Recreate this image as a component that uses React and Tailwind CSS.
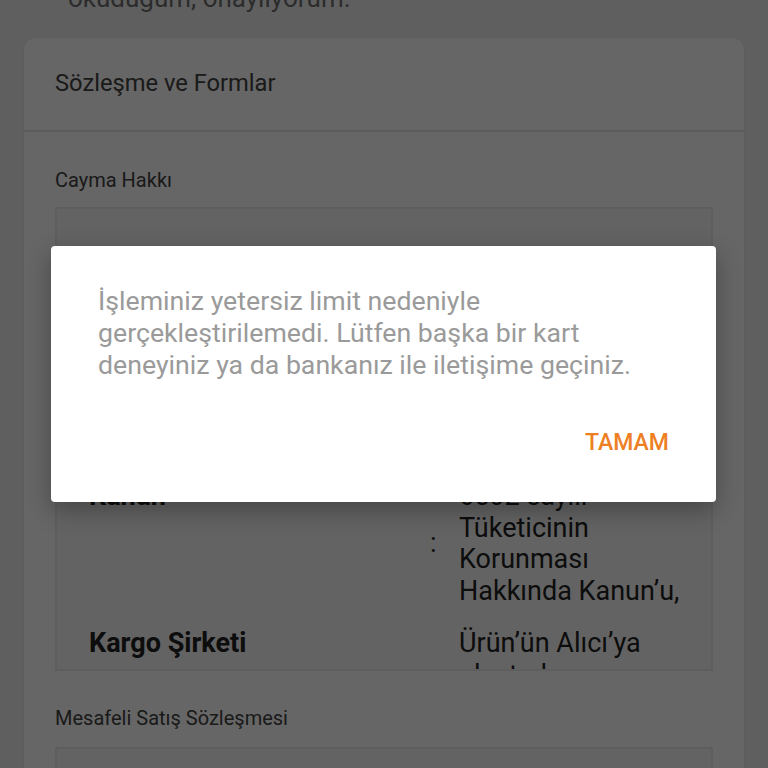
import React from "react";

export default function App() {
  const font = { fontFamily: "Roboto, 'Noto Sans', sans-serif" };
  return (
    <div className="relative w-[768px] h-[768px] overflow-hidden bg-[#eeeeee]" style={font}>
      {/* page */}
      <div className="flex flex-col">
        <div className="pl-[68px] mt-[-18px] h-[32px] text-[26px] leading-[32px] text-[#6e6e6e] whitespace-nowrap">
          okuduğum, onaylıyorum.
        </div>
        <div className="mx-[24px] mt-[24px] bg-white rounded-[12px] shadow-[0_1px_3px_rgba(0,0,0,0.08)]">
          <div className="h-[94px] flex items-center px-[31px] border-b-2 border-[#e4e4e4] text-[23.7px] text-[#424242]">
            Sözleşme ve Formlar
          </div>
          <div className="px-[31px] pt-[35px]">
            <div className="text-[20px] leading-[26px] text-[#424242]">Cayma Hakkı</div>
            <div className="mt-[14px] h-[464px] overflow-hidden bg-[#f8f8f8] border-2 border-[#ebebeb]">
              <div className="pl-[32px] pr-[20px] pt-[41px] grid grid-cols-[341px_29px_1fr] text-[27px] leading-[31.5px] text-[#222]">
                <div className="font-bold pb-[21px]">Satıcı</div>
                <div className="self-center pb-[21px]">:</div>
                <div className="pb-[21px] whitespace-nowrap">
                  Hepsiburada
                  <br />
                  D-Market
                  <br />
                  Elektronik
                </div>
                <div className="font-bold pb-[21px]">Konu</div>
                <div className="self-center pb-[21px]">:</div>
                <div className="pb-[21px] whitespace-nowrap">
                  Cayma hakkı
                  <br />
                  kullanım
                  <br />
                  koşulları
                </div>
                <div className="font-bold pb-[21px]">Kanun</div>
                <div className="self-center pb-[21px]">:</div>
                <div className="pb-[21px] whitespace-nowrap">
                  6502 sayılı
                  <br />
                  Tüketicinin
                  <br />
                  Korunması
                  <br />
                  Hakkında Kanun’u,
                </div>
                <div className="font-bold pb-[21px]">Kargo Şirketi</div>
                <div className="self-center pb-[21px]"></div>
                <div className="pb-[21px] whitespace-nowrap">
                  Ürün’ün Alıcı’ya
                  <br />
                  ulaştırılması
                  <br />
                  için anlaşmalı
                </div>
              </div>
            </div>
            <div className="pt-[34px] text-[20px] leading-[26px] text-[#424242]">Mesafeli Satış Sözleşmesi</div>
            <div className="mt-[16px] h-[200px] bg-[#f8f8f8] border-2 border-[#ebebeb]"></div>
          </div>
        </div>
      </div>

      {/* scrim */}
      <div className="absolute inset-0 bg-black/60"></div>

      {/* dialog */}
      <div className="absolute left-[51px] top-[246px] w-[665px] h-[256px] bg-white rounded-[4px] shadow-[0_8px_24px_rgba(0,0,0,0.3)] flex flex-col">
        <div className="pl-[47px] pr-[20px] pt-[39px] text-[26.7px] leading-[32px] text-[#9a9a9a] whitespace-nowrap">
          İşleminiz yetersiz limit nedeniyle
          <br />
          gerçekleştirilemedi. Lütfen başka bir kart
          <br />
          deneyiniz ya da bankanız ile iletişime geçiniz.
        </div>
        <div className="flex justify-end pr-[47px] mt-[47px]">
          <span className="text-[23px] leading-[30px] font-medium text-[#ee8024]">TAMAM</span>
        </div>
      </div>
    </div>
  );
}
